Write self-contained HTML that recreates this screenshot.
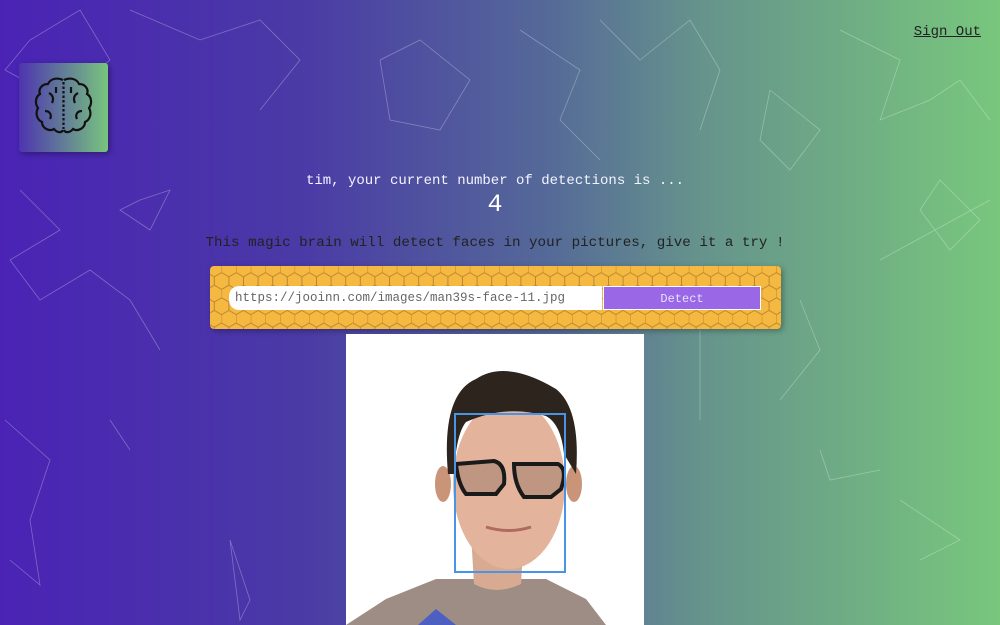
<!DOCTYPE html>
<html><head><meta charset="utf-8"><style>
html,body{margin:0;padding:0;width:1000px;height:625px;overflow:hidden}
body{background:linear-gradient(90deg,#4a23b5 0%,#4a3aa6 30%,#556a98 55%,#66938c 70%,#78c77d 100%);font-family:"Liberation Mono",monospace;position:relative}
.so{position:absolute;right:19px;top:24px;font-size:14px;color:#222;text-decoration:underline}
.logo{position:absolute;left:19px;top:63px;width:89px;height:89px;border-radius:3px;background:linear-gradient(90deg,#4d34b0,#78c57e);box-shadow:2px 2px 6px rgba(0,0,0,.35)}
.t1{position:absolute;top:173px;width:990px;text-align:center;color:#f4f4ff;font-size:14px}
.t2{position:absolute;top:190px;width:990px;text-align:center;color:#fff;font-size:25px}
.t3{position:absolute;top:235px;width:990px;text-align:center;color:#222;font-size:14.2px}
.bar{position:absolute;left:210px;top:266px;width:571px;height:63px;background:#f5b942;border-radius:4px;box-shadow:2px 2px 6px rgba(0,0,0,.3);overflow:hidden}
.inp{position:absolute;left:229px;top:286px;width:373px;height:24px;background:#fff;border-radius:10px 0 0 10px;font-size:12.5px;color:#666;line-height:24px;padding-left:6px;box-sizing:border-box}
.btn{position:absolute;left:603px;top:286px;width:158px;height:24px;background:#9a68e6;color:#e8e0ff;font-size:12px;text-align:center;line-height:24px;border:1px solid #fff;box-sizing:border-box}
.img{position:absolute;left:346px;top:334px;width:298px;height:291px;background:#fff;overflow:hidden}
</style></head><body>
<svg style="position:absolute;left:0;top:0" width="1000" height="625" stroke="rgba(255,255,255,.3)" stroke-width="0.8" fill="none">
<path d="M5 70L30 40L80 10L110 60L60 100L5 70ZM20 190L60 230L10 260L40 300L90 270L130 300L160 350M140 200L170 190L150 230L120 210ZM5 420L50 460L30 520L40 585L10 560M130 10L200 40L260 20L300 60L260 110M380 60L420 40L470 80L440 130L390 120L380 60M520 30L580 70L560 120L600 160M600 20L640 60L690 20L720 70L700 130M770 90L820 130L790 170L760 140L770 90M840 30L900 60L880 120L930 100L960 80L990 120M940 180L980 220L950 250L920 210ZM800 300L820 350L780 400M700 330L700 420M820 450L830 480L880 470M900 500L960 540L920 560M230 540L250 600L240 620L230 540M110 420L130 450M880 260L990 200"/>
</svg>
<div class="so">Sign Out</div>
<div class="logo"><svg width="89" height="89" viewBox="0 0 89 89" fill="none" stroke="#111" stroke-width="2.2"><path d="M44 17C38 14 31 16 29 21C23 21 19 26 21 31C16 34 16 41 19 45C16 50 18 57 23 59C23 65 30 69 35 66C38 70 43 70 44 67M45 17C51 14 58 16 60 21C66 21 70 26 68 31C73 34 73 41 70 45C73 50 71 57 66 59C66 65 59 69 54 66C51 70 46 70 45 67"/><path d="M44.5 19V66" stroke-dasharray="2.5 2"/><path d="M30 30C34 32 35 36 33 40M59 30C55 32 54 36 56 40M26 48C31 48 33 52 31 56M63 48C58 48 56 52 58 56M37 24V30M52 24V30"/></svg></div>
<div class="t1">tim, your current number of detections is ...</div>
<div class="t2">4</div>
<div class="t3">This magic brain will detect faces in your pictures, give it a try !</div>
<div class="bar"><svg width="571" height="63"><defs><pattern id="h" width="14.6" height="25.2" patternUnits="userSpaceOnUse" x="-3" y="-6"><path d="M0 4.2L7.3 0L14.6 4.2M0 4.2V12.6L7.3 16.8L14.6 12.6M7.3 16.8V25.2" fill="none" stroke="#b5822c" stroke-width="0.9"/></pattern></defs><rect width="571" height="63" fill="url(#h)"/></svg></div>
<div class="inp">https://jooinn.com/images/man39s-face-11.jpg</div>
<div class="btn">Detect</div>
<div class="img"><svg width="298" height="291">
<path d="M0 291L40 265L90 245L200 245L240 265L260 291Z" fill="#9d8d85"/>
<path d="M72 291L90 275L110 291Z" fill="#4e5fc2"/>
<path d="M125 200L128 250Q150 262 175 250L178 200Z" fill="#d7aa91"/>
<ellipse cx="97" cy="150" rx="8" ry="18" fill="#c99478"/>
<ellipse cx="228" cy="150" rx="8" ry="18" fill="#c99478"/>
<ellipse cx="163" cy="150" rx="56" ry="85" fill="#e3b49b"/>
<path d="M102 140Q95 60 130 45Q160 25 210 55Q235 75 230 140L218 120Q215 90 200 82Q160 70 120 88Q110 100 108 140Z" fill="#2d241d"/>
<path d="M110 130L148 127Q160 130 158 150L150 160L120 160Q112 150 110 130ZM168 130L212 130Q222 135 215 155L205 163L178 163Q168 150 168 130Z" fill="rgba(80,60,55,.25)" stroke="#1a1a1a" stroke-width="4"/>
<path d="M140 193Q163 200 185 193" stroke="#b06a60" stroke-width="3" fill="none"/>
<rect x="109" y="80" width="110" height="158" fill="none" stroke="#4a94e6" stroke-width="2"/>
</svg></div>
</body></html>
